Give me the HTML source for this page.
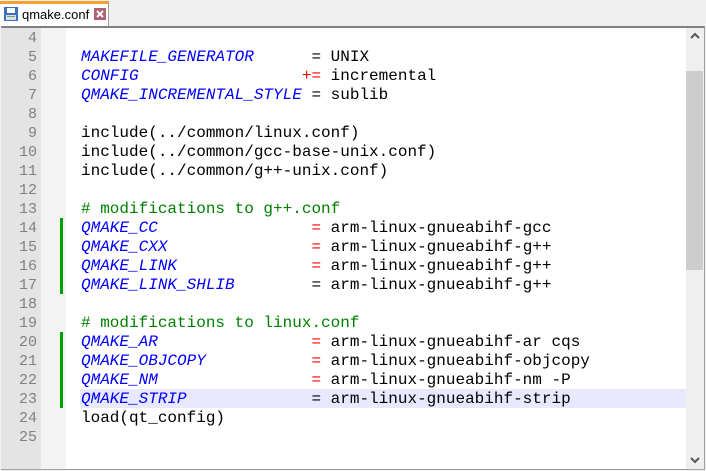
<!DOCTYPE html>
<html><head><style>
body{margin:0;width:706px;height:471px;background:#f0f0f0;position:relative;overflow:hidden;font-family:"Liberation Mono",monospace}
.tab{position:absolute;left:0;top:1px;width:109px;height:25px;background:#fff;border-right:1px solid #a0a0a0;border-top:3px solid #f5a030;box-sizing:border-box}
.tab .t{position:absolute;left:22px;top:3px;font:13px "Liberation Sans",sans-serif;color:#000}
.frame{position:absolute;left:1px;top:26px;width:704px;height:444px;border:1px solid #a0a0a0;border-top:2px solid #808080;box-sizing:border-box;background:#fff}
.ln{position:absolute;left:1px;top:28px;width:40px;height:441px;background:#e4e4e4}
.fold{position:absolute;left:41px;top:28px;width:25px;height:441px;background:#f3f3f3}
.row{position:absolute;left:0;height:19px;line-height:19px;font-size:16px;white-space:pre;margin-top:1px}
.num{position:absolute;left:0;width:37px;text-align:right;color:#808080;font-size:15px}
.code{position:absolute;left:81px;color:#000}
.k{color:#0000ff;font-style:italic}
.r{color:#ff0000}
.c{color:#008000}
.g{position:absolute;left:60px;width:3px;background:#00a000}
.sb{position:absolute;left:686px;top:28px;width:18px;height:441px;background:#efefef}
.th{position:absolute;left:686px;top:71px;width:17px;height:199px;background:#cdcdcd}
</style></head><body>
<div class="tab">
<svg style="position:absolute;left:3px;top:2px" width="16" height="16" viewBox="0 0 16 16"><rect x="1" y="1" width="14" height="14" fill="#3a70c0"/><rect x="4" y="2" width="8" height="5" fill="#fff"/><rect x="3" y="9" width="10" height="5" fill="#dde"/><rect x="4" y="10" width="8" height="1" fill="#6a6"/></svg>
<span class="t">qmake.conf</span>
<svg style="position:absolute;left:94px;top:4px" width="12" height="12"><rect width="12" height="12" fill="#b06070"/><path d="M3 3L9 9M9 3L3 9" stroke="#fff" stroke-width="2"/></svg>
</div>
<div class="frame"></div>
<div class="ln"></div><div class="fold"></div>
<div style="position:absolute;left:80px;top:389px;width:606px;height:19px;background:#e8e8ff"></div>
<div class="g" style="top:218px;height:76px"></div>
<div class="g" style="top:332px;height:76px"></div>
<div class="sb"></div><div class="th"></div>
<svg style="position:absolute;left:690px;top:32px" width="10" height="8"><path d="M1 6L5 2L9 6" stroke="#555" stroke-width="2" fill="none"/></svg>
<svg style="position:absolute;left:690px;top:456px" width="10" height="8"><path d="M1 2L5 6L9 2" stroke="#555" stroke-width="2" fill="none"/></svg>
<div class="row" style="top:28px"><span class="num">4</span></div>
<div class="row" style="top:47px"><span class="num">5</span><span class="code"><span class="k">MAKEFILE_GENERATOR</span>      = UNIX</span></div>
<div class="row" style="top:66px"><span class="num">6</span><span class="code"><span class="k">CONFIG</span>                 <span class="r">+=</span> incremental</span></div>
<div class="row" style="top:85px"><span class="num">7</span><span class="code"><span class="k">QMAKE_INCREMENTAL_STYLE</span> = sublib</span></div>
<div class="row" style="top:104px"><span class="num">8</span></div>
<div class="row" style="top:123px"><span class="num">9</span><span class="code">include(../common/linux.conf)</span></div>
<div class="row" style="top:142px"><span class="num">10</span><span class="code">include(../common/gcc-base-unix.conf)</span></div>
<div class="row" style="top:161px"><span class="num">11</span><span class="code">include(../common/g++-unix.conf)</span></div>
<div class="row" style="top:180px"><span class="num">12</span></div>
<div class="row" style="top:199px"><span class="num">13</span><span class="code c"># modifications to g++.conf</span></div>
<div class="row" style="top:218px"><span class="num">14</span><span class="code"><span class="k">QMAKE_CC</span>                <span class="r">=</span> arm-linux-gnueabihf-gcc</span></div>
<div class="row" style="top:237px"><span class="num">15</span><span class="code"><span class="k">QMAKE_CXX</span>               <span class="r">=</span> arm-linux-gnueabihf-g++</span></div>
<div class="row" style="top:256px"><span class="num">16</span><span class="code"><span class="k">QMAKE_LINK</span>              <span class="r">=</span> arm-linux-gnueabihf-g++</span></div>
<div class="row" style="top:275px"><span class="num">17</span><span class="code"><span class="k">QMAKE_LINK_SHLIB</span>        = arm-linux-gnueabihf-g++</span></div>
<div class="row" style="top:294px"><span class="num">18</span></div>
<div class="row" style="top:313px"><span class="num">19</span><span class="code c"># modifications to linux.conf</span></div>
<div class="row" style="top:332px"><span class="num">20</span><span class="code"><span class="k">QMAKE_AR</span>                <span class="r">=</span> arm-linux-gnueabihf-ar cqs</span></div>
<div class="row" style="top:351px"><span class="num">21</span><span class="code"><span class="k">QMAKE_OBJCOPY</span>           <span class="r">=</span> arm-linux-gnueabihf-objcopy</span></div>
<div class="row" style="top:370px"><span class="num">22</span><span class="code"><span class="k">QMAKE_NM</span>                <span class="r">=</span> arm-linux-gnueabihf-nm -P</span></div>
<div class="row" style="top:389px"><span class="num">23</span><span class="code"><span class="k">QMAKE_STRIP</span>             = arm-linux-gnueabihf-strip</span></div>
<div class="row" style="top:408px"><span class="num">24</span><span class="code">load(qt_config)</span></div>
<div class="row" style="top:427px"><span class="num">25</span></div>
</body></html>
